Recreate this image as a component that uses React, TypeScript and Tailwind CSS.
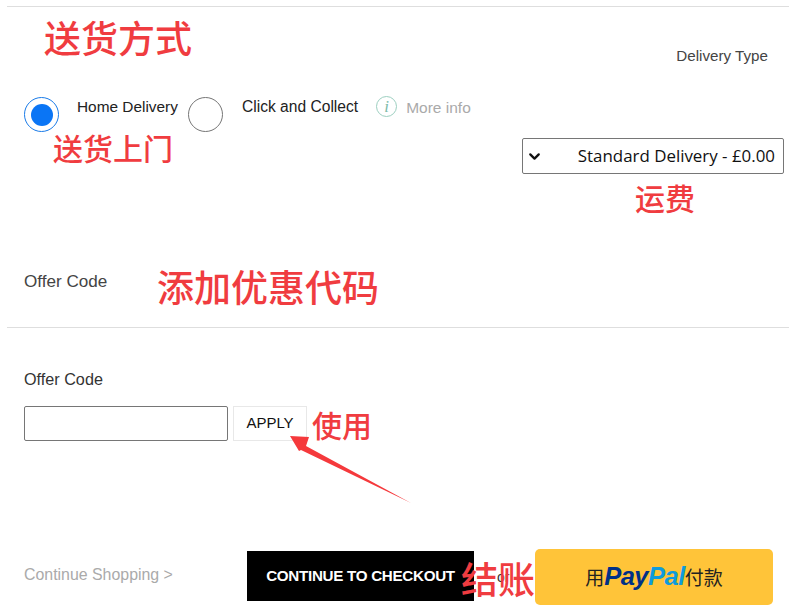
import React from "react";
import { ChevronDown } from "lucide-react";

const sans = "font-['Liberation_Sans',Arial,sans-serif]";
const cjk = "font-['Noto_Sans_CJK_SC','Noto_Sans',sans-serif]";

// red notes that were painted over the screenshot
const Note = ({ className, children }: { className: string; children: React.ReactNode }) => (
  <span className={`absolute whitespace-nowrap font-medium leading-none text-[#f03c40] ${cjk} ${className}`}>{children}</span>
);

const Radio = ({ checked }: { checked?: boolean }) => (
  <span
    className={`flex h-[35px] w-[35px] shrink-0 items-center justify-center rounded-full border ${
      checked ? "border-[#1a7be8]" : "border-[#767676]"
    }`}
  >
    {checked && <span className="h-[22px] w-[22px] rounded-full bg-[#0a75f5]" />}
  </span>
);

export default function App() {
  return (
    <div className={`relative h-[610px] w-[796px] overflow-hidden bg-white text-[#333] ${sans}`}>
      <div className="px-[7px] pt-[6px]">
        <hr className="border-[#dedede]" />
      </div>

      {/* Delivery */}
      <div className="flex justify-end pr-7 pt-[40px]">
        <span className="text-[15.2px] leading-[18px] text-[#444]">Delivery Type</span>
      </div>
      <div className="flex items-start pl-6 pt-[32px]">
        <Radio checked />
        <span className="ml-[18px] mt-[1px] w-[111px] text-[15.4px] leading-[18px] text-[#222]">Home Delivery</span>
        <Radio />
        <span className="ml-[19px] mt-[1px] text-[15.6px] leading-[18px] text-[#222]">Click and Collect</span>
        <span className="ml-[18px] flex h-[21px] w-[21px] -translate-y-px items-center justify-center rounded-full border border-[#9ccfc0] font-['Liberation_Serif',serif] text-[17px] italic leading-none text-[#7dbba9]">
          i
        </span>
        <span className="ml-[9px] mt-[1px] text-[15.5px] leading-[20px] text-[#aaa]">More info</span>
      </div>
      <div className="flex justify-end pr-3 pt-[6px]">
        <div className="flex h-9 w-[262px] items-center justify-between rounded-[2px] border border-[#767676] pl-[3px] pr-[8px] font-['Open_Sans',sans-serif] text-[16.9px] text-[#111]">
          <ChevronDown size={17} strokeWidth={3.2} className="text-[#111]" />
          <span>Standard Delivery - £0.00</span>
        </div>
      </div>

      {/* Offer code */}
      <div className="pl-6 pt-[98px] text-[17.1px] leading-5 text-[#444]">Offer Code</div>
      <div className="px-[7px] pt-[35px]">
        <hr className="border-[#dedede]" />
      </div>
      <div className="pl-6 pt-[41px] text-[16.2px] leading-5 text-[#333]">Offer Code</div>
      <div className="flex gap-[5px] pl-6 pt-[17px]">
        <input className="h-[35px] w-[204px] rounded-[2px] border border-[#767676] bg-white" />
        <button className="h-[35px] w-[74px] border border-[#e8e8e8] bg-white text-[15px] text-[#111]">APPLY</button>
      </div>

      {/* Footer actions */}
      <div className="flex items-start pl-6 pr-[23px] pt-[108px]">
        <span className="mt-[16px] w-[223px] text-[15.9px] leading-5 text-[#aaa]">Continue Shopping &gt;</span>
        <button className="mt-[2px] h-[50px] w-[227px] bg-black text-center text-[15.2px] font-bold tracking-[-0.3px] text-white">
          CONTINUE TO CHECKOUT
        </button>
        <span className="ml-[23px] mt-[18px] w-[38px] text-[14px] leading-5 text-[#333]">or</span>
        <button className="flex h-14 w-[238px] items-center justify-center rounded-[5px] bg-[#ffc439] text-[19px] text-[#222]">
          <span className={cjk}>用</span>
          <span className="text-[25.5px] font-bold italic leading-none tracking-[-0.5px]">
            <span className="text-[#003087]">Pay</span>
            <span className="text-[#0f9bdc]">Pal</span>
          </span>
          <span className={cjk}>付款</span>
        </button>
      </div>

      {/* Annotations */}
      <Note className="left-[44px] top-[19px] text-[37px]">送货方式</Note>
      <Note className="left-[53px] top-[132px] text-[30px]">送货上门</Note>
      <Note className="left-[635px] top-[182px] text-[30px]">运费</Note>
      <Note className="left-[157px] top-[268px] text-[37px]">添加优惠代码</Note>
      <Note className="left-[312px] top-[409px] text-[30px]">使用</Note>
      <Note className="left-[461px] top-[560px] text-[37px]">结账</Note>
      <svg className="absolute left-[285px] top-[430px]" width="130" height="76" viewBox="285 430 130 76">
        <polygon points="290,436 309,437 306,446 411,503 301,450 299,451" fill="#f5393c" />
      </svg>
    </div>
  );
}
